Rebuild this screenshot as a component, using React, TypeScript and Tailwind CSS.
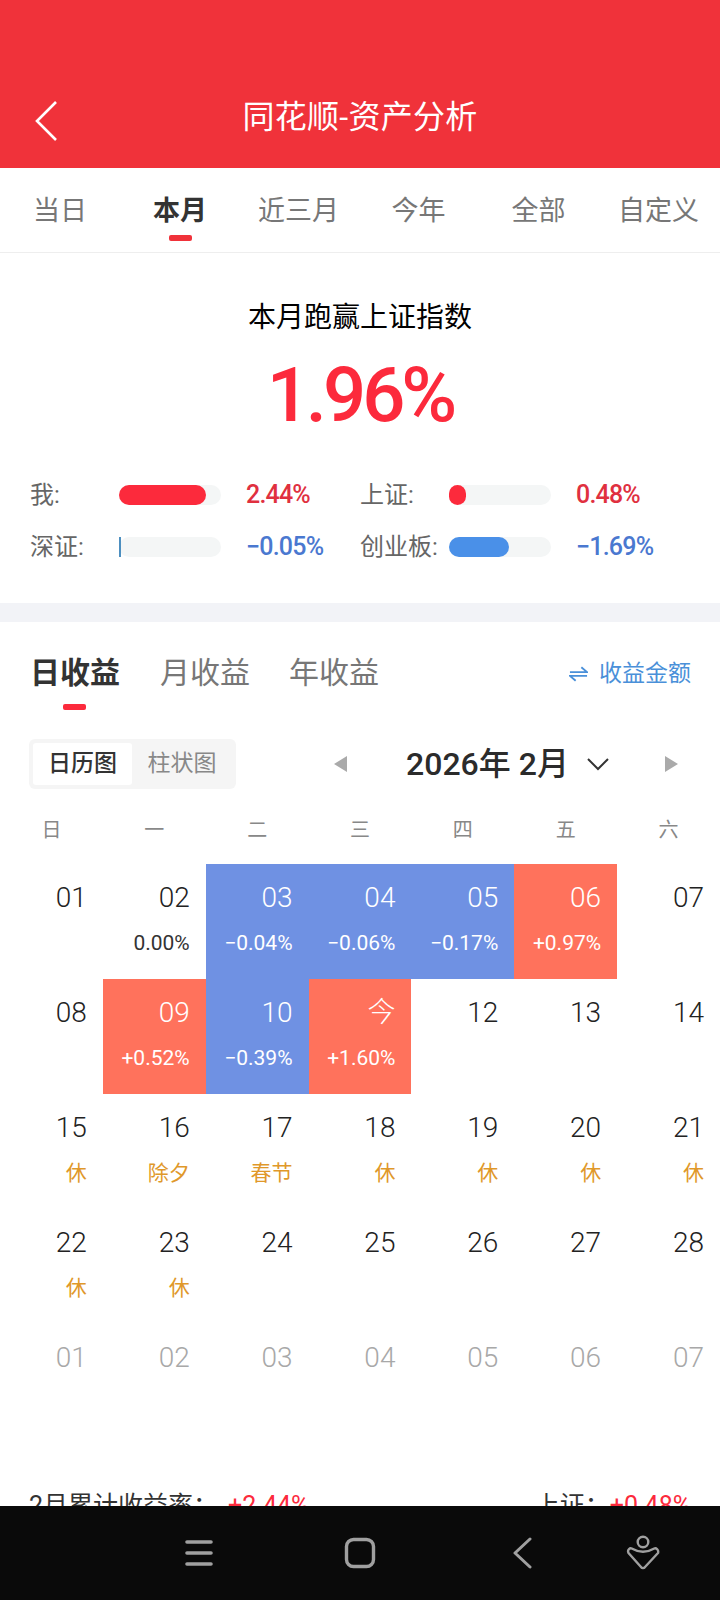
const periods = ["当日", "本月", "近三月", "今年", "全部", "自定义"];
const weekdays = ["日", "一", "二", "三", "四", "五", "六"];

type Day = { d: string; sub?: string; tone?: "up" | "down"; muted?: boolean; holiday?: boolean };

const days: Day[] = [
  { d: "01" },
  { d: "02", sub: "0.00%" },
  { d: "03", sub: "−0.04%", tone: "down" },
  { d: "04", sub: "−0.06%", tone: "down" },
  { d: "05", sub: "−0.17%", tone: "down" },
  { d: "06", sub: "+0.97%", tone: "up" },
  { d: "07" },
  { d: "08" },
  { d: "09", sub: "+0.52%", tone: "up" },
  { d: "10", sub: "−0.39%", tone: "down" },
  { d: "今", sub: "+1.60%", tone: "up" },
  { d: "12" },
  { d: "13" },
  { d: "14" },
  { d: "15", sub: "休", holiday: true },
  { d: "16", sub: "除夕", holiday: true },
  { d: "17", sub: "春节", holiday: true },
  { d: "18", sub: "休", holiday: true },
  { d: "19", sub: "休", holiday: true },
  { d: "20", sub: "休", holiday: true },
  { d: "21", sub: "休", holiday: true },
  { d: "22", sub: "休", holiday: true },
  { d: "23", sub: "休", holiday: true },
  { d: "24" },
  { d: "25" },
  { d: "26" },
  { d: "27" },
  { d: "28" },
  { d: "01", muted: true },
  { d: "02", muted: true },
  { d: "03", muted: true },
  { d: "04", muted: true },
  { d: "05", muted: true },
  { d: "06", muted: true },
  { d: "07", muted: true },
];

const Stat = ({
  label,
  value,
  fill,
  color,
  textColor,
}: {
  label: string;
  value: string;
  fill: string;
  color: string;
  textColor: string;
}) => (
  <div className="flex h-5 items-center">
    <span className="w-[89px] text-[24px] text-[#666]">{label}</span>
    <div className="h-5 w-[102px] rounded-full bg-[#f4f6f6]">
      <div className={`h-full ${fill} ${color}`} />
    </div>
    <span className={`ml-[25px] text-[25px] font-medium tracking-[-0.8px] ${textColor}`}>{value}</span>
  </div>
);

const DayCell = ({ day }: { day: Day }) => {
  let bg = "";
  if (day.tone === "up") bg = "bg-[#ff725c]";
  if (day.tone === "down") bg = "bg-[#6f91e3]";
  const light = !!day.tone;
  let subColor = "text-[#333]";
  if (light) subColor = "text-white";
  if (day.holiday) subColor = "text-[#e0982a]";

  return (
    <div className={`flex h-[115px] flex-col items-end pr-4 pt-[15px] ${bg}`}>
      <span
        className={`text-[28px] font-light leading-[38px] ${
          light ? "text-white" : day.muted ? "text-[#a8a8a8]" : "text-[#222]"
        }`}
      >
        {day.d}
      </span>
      {day.sub && <span className={`mt-[10px] text-[21px] leading-[32px] ${subColor}`}>{day.sub}</span>}
    </div>
  );
};

export default function App() {
  return (
    <div
      className="flex h-[1600px] w-[720px] flex-col overflow-hidden bg-white"
      style={{ fontFamily: 'Roboto, "Noto Sans CJK SC", sans-serif' }}
    >
      <header className="relative flex h-[168px] shrink-0 items-end justify-center bg-[#f0323a] pb-[30px] text-[32px] leading-[42px] tracking-[0.3px] text-white">
        <svg
          className="absolute left-[34px] top-[100px]"
          width="26"
          height="42"
          viewBox="0 0 26 42"
          fill="none"
          stroke="white"
          strokeWidth="2.6"
        >
          <path d="M22 2 3 21l19 19" />
        </svg>
        同花顺-资产分析
      </header>

      <div className="flex-1 overflow-hidden">
        <nav className="flex h-[85px] border-b border-[#eeeeee]">
          {periods.map((p, i) => (
            <div key={p} className="relative flex w-[120px] justify-center pt-[23px]">
              <span
                className={`text-[27px] leading-[40px] ${
                  p === "本月" ? "font-bold text-[#333]" : "text-[#777]"
                } ${i > 1 ? "mr-[3px]" : ""}`}
              >
                {p}
              </span>
              {p === "本月" && (
                <span className="absolute bottom-[11px] h-[6px] w-[23px] rounded-[2px] bg-[#f0323a]" />
              )}
            </div>
          ))}
        </nav>

        <section className="h-[350px] pt-[45px]">
          <h2 className="text-center text-[28px] leading-[40px] text-black">本月跑赢上证指数</h2>
          <p className="mt-[12px] text-center text-[76px] font-medium leading-[90px] tracking-[-4px] text-[#fc2a3c]">
            1.96%
          </p>
          <div className="mt-[45px] grid grid-cols-[330px_1fr] gap-y-[32px] pl-[30px]">
            <Stat label="我:" value="2.44%" fill="w-[87px] rounded-full" color="bg-[#fc2a3c]" textColor="text-[#e0303f]" />
            <Stat label="上证:" value="0.48%" fill="w-[17px] rounded-full" color="bg-[#fc2a3c]" textColor="text-[#e0303f]" />
            <Stat label="深证:" value="−0.05%" fill="w-[2px]" color="bg-[#4d8fc0]" textColor="text-[#4a78d0]" />
            <Stat label="创业板:" value="−1.69%" fill="w-[60px] rounded-full" color="bg-[#4a90e8]" textColor="text-[#4a78d0]" />
          </div>
        </section>

        <div className="h-[19px] bg-[#f2f3f7]" />

        <section>
          <div className="relative flex h-[109px] items-start pt-[31px]">
            <span className="ml-[30px] text-[30px] font-bold leading-[40px] text-[#333]">日收益</span>
            <span className="ml-[40px] text-[30px] leading-[40px] text-[#777]">月收益</span>
            <span className="ml-[39px] text-[30px] leading-[40px] text-[#777]">年收益</span>
            <span className="absolute left-[63px] top-[82px] h-[6px] w-[23px] rounded-[2px] bg-[#fc2a3c]" />
            <div className="ml-auto mr-[29px] mt-[3px] flex items-center text-[23px] leading-[36px] text-[#4a90d9]">
              <svg className="mr-[11px]" width="19" height="16" viewBox="0 0 20 16" fill="none" stroke="#4a90d9" strokeWidth="2">
                <path d="M1 6h18l-6-5M19 10H1l6 5" />
              </svg>
              收益金额
            </div>
          </div>

          <div className="flex h-[58px] items-center pl-[29px] pt-[8px]">
            <div className="flex h-[50px] w-[207px] items-center rounded-[6px] bg-[#f5f5f5] px-1 text-[23px]">
              <span className="flex h-[42px] w-[99px] items-center justify-center rounded-[3px] bg-white font-medium text-[#333]">
                日历图
              </span>
              <span className="flex-1 text-center text-[#888]">柱状图</span>
            </div>
            <span className="ml-[98px] h-0 w-0 border-y-[8px] border-r-[13px] border-y-transparent border-r-[#aaa]" />
            <span className="ml-[59px] text-[32px] font-medium leading-[42px] text-[#2b2b2b]">2026年 2月</span>
            <svg className="ml-[17px]" width="24" height="14" viewBox="0 0 24 14" fill="none" stroke="#333" strokeWidth="2">
              <path d="m2 2 10 10L22 2" />
            </svg>
            <span className="ml-[55px] h-0 w-0 border-y-[8px] border-l-[13px] border-y-transparent border-l-[#aaa]" />
          </div>

          <div className="mt-[26px] grid h-[33px] grid-cols-7 text-center text-[20px] leading-[30px] text-[#888]">
            {weekdays.map((w) => (
              <span key={w}>{w}</span>
            ))}
          </div>

          <div className="mt-[16px] grid grid-cols-7">
            {days.map((day, i) => (
              <DayCell key={i} day={day} />
            ))}
          </div>

          <div className="mt-[50px] flex justify-between px-[29px] text-[25px] leading-[34px]">
            <span className="text-[#333]">
              2月累计收益率：<span className="ml-[10px] text-[#fc2a3c]">+2.44%</span>
            </span>
            <span className="text-[#333]">
              上证：<span className="text-[#fc2a3c]">+0.48%</span>
            </span>
          </div>
        </section>
      </div>

      <footer className="relative flex h-[94px] shrink-0 items-center bg-[#0a0a0a]">
        <svg className="absolute left-[184px] top-[32px]" width="30" height="30" viewBox="0 0 30 30" fill="none" stroke="#a0a0a0" strokeWidth="3.6" strokeLinecap="round">
          <path d="M3 4h24M3 15h24M3 26h24" />
        </svg>
        <svg className="absolute left-[344px] top-[31px]" width="32" height="32" viewBox="0 0 32 32" fill="none" stroke="#a0a0a0" strokeWidth="3.4">
          <rect x="2.500" y="2.500" width="27" height="27" rx="7" />
        </svg>
        <svg className="absolute left-[510px] top-[31px]" width="24" height="32" viewBox="0 0 24 32" fill="none" stroke="#a0a0a0" strokeWidth="3" strokeLinecap="round" strokeLinejoin="round">
          <path d="M20 2 5 16l15 14" />
        </svg>
        <svg className="absolute left-[626px] top-[29px]" width="34" height="35" viewBox="0 0 34 35" fill="none" stroke="#a0a0a0" strokeWidth="2.4" strokeLinejoin="round">
          <circle cx="17" cy="7" r="5.300" />
          <path d="M5.700 13.500Q17 20 28.300 13.500C30 12.500 33 15 32 18L19 32C18 33.500 16 33.500 15 32L2.500 18C1 15 4 12.500 5.700 13.500Z" />
        </svg>
      </footer>
    </div>
  );
}
